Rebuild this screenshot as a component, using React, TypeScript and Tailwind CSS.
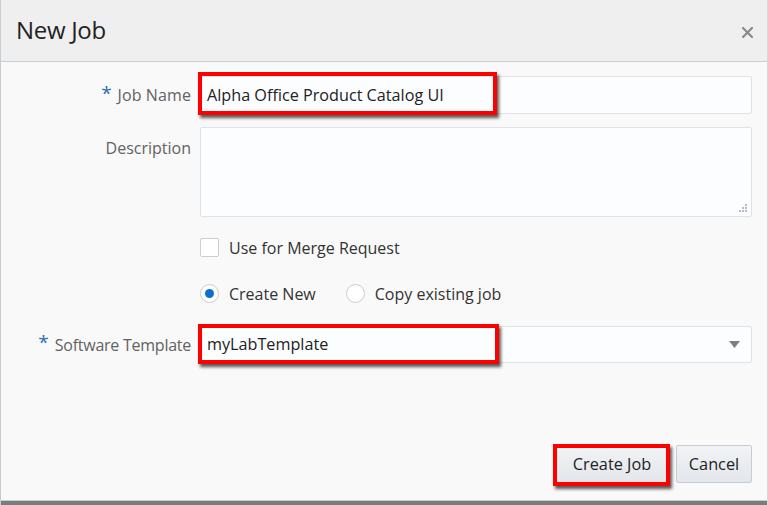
import React from "react";

const font = { fontFamily: '"Open Sans", "Noto Sans", Arial, sans-serif' };

function RedBox({ className }: { className: string }) {
  return (
    <div
      className={`pointer-events-none absolute border-[4px] border-[#ff0000] shadow-[2px_3px_3px_rgba(0,0,0,0.65)] ${className}`}
    />
  );
}

export default function App() {
  return (
    <div
      className="w-[768px] h-[505px] flex flex-col bg-[#f9f9f9] border-l border-l-[#c3ced9] border-r border-r-[#d6d9dc] overflow-hidden text-[#333]"
      style={font}
    >
      {/* Header */}
      <div className="h-[62px] shrink-0 bg-[#efefef] border-b border-b-[#c7d0d8] flex items-center justify-between pl-[15px] pr-[14px]">
        <div className="text-[24px] leading-none tracking-[-0.3px] text-[#222] -mt-[2px]">New Job</div>
        <svg width="11" height="11" viewBox="0 0 11 11" className="mt-[4px]">
          <path d="M1 1 L10 10 M10 1 L1 10" stroke="#858b91" strokeWidth="2.2" strokeLinecap="square" />
        </svg>
      </div>

      {/* Body */}
      <div className="flex-1 flex flex-col pt-[14px] pr-[15px]">
        {/* Job Name */}
        <div className="flex">
          <div className="w-[190px] shrink-0 flex justify-end items-center h-[38px] text-[16px] text-[#626262]">
            <span className="text-[#2f6cb5] text-[19px] mr-[6px] -mt-[4px]">*</span>
            <span className="tracking-[0.1px]">Job Name</span>
          </div>
          <div className="ml-[9px] flex-1 relative">
            <div className="h-[38px] bg-[#fcfdfe] border border-[#dfe3e8] rounded-[2px] flex items-center pl-[6px] text-[16.2px] text-[#222]">
              Alpha Office Product Catalog UI
            </div>
            <RedBox className="left-[-2px] top-[-4px] w-[299px] h-[43px]" />
          </div>
        </div>

        {/* Description */}
        <div className="flex mt-[13px]">
          <div className="w-[190px] shrink-0 flex justify-end pt-[9px] text-[16px] text-[#626262]">
            Description
          </div>
          <div className="ml-[9px] flex-1 relative h-[90px] bg-[#fcfdfe] border border-[#dfe3e8] rounded-[2px]">
            <svg width="10" height="10" viewBox="0 0 10 10" className="absolute right-[3px] bottom-[3px]">
              <rect x="7" y="1" width="2" height="2" fill="#b8bcc0" />
              <rect x="4" y="4" width="2" height="2" fill="#b8bcc0" />
              <rect x="7" y="4" width="2" height="2" fill="#b8bcc0" />
              <rect x="1" y="7" width="2" height="2" fill="#b8bcc0" />
              <rect x="4" y="7" width="2" height="2" fill="#b8bcc0" />
              <rect x="7" y="7" width="2" height="2" fill="#b8bcc0" />
            </svg>
          </div>
        </div>

        {/* Checkbox */}
        <div className="flex items-center mt-[21px] ml-[199px] h-[19px]">
          <div className="w-[19px] h-[19px] bg-white border border-[#c6ced6] rounded-[2px]" />
          <span className="ml-[10px] text-[16px] text-[#333]">Use for Merge Request</span>
        </div>

        {/* Radios */}
        <div className="flex items-center mt-[27px] ml-[199px] h-[19px]">
          <div className="w-[19px] h-[19px] rounded-full bg-white border border-[#c6ced6] flex items-center justify-center">
            <div className="w-[9px] h-[9px] rounded-full bg-[#0a6fcf]" />
          </div>
          <span className="ml-[10px] text-[16px] text-[#333]">Create New</span>
          <div className="ml-[30px] w-[19px] h-[19px] rounded-full bg-white border border-[#c6ced6]" />
          <span className="ml-[10px] text-[16px] text-[#333]">Copy existing job</span>
        </div>

        {/* Software Template */}
        <div className="flex mt-[23px]">
          <div className="w-[190px] shrink-0 flex justify-end items-center h-[37px] text-[16px] text-[#626262]">
            <span className="text-[#2f6cb5] text-[19px] mr-[6px] -mt-[4px]">*</span>
            <span className="tracking-[-0.25px]">Software Template</span>
          </div>
          <div className="ml-[9px] flex-1 relative">
            <div className="h-[37px] bg-[#fcfdfe] border border-[#dfe3e8] rounded-[2px] flex items-center justify-between pl-[6px] pr-[11px] text-[16.2px] text-[#222]">
              <span>myLabTemplate</span>
              <svg width="11" height="7" viewBox="0 0 11 7">
                <path d="M0 0 L11 0 L5.5 7 Z" fill="#7b7f83" />
              </svg>
            </div>
            <RedBox className="left-[-2px] top-[-2px] w-[301px] h-[40px]" />
          </div>
        </div>

        {/* Buttons */}
        <div className="flex justify-end mt-[82px] gap-[8px]">
          <div className="relative">
            <div className="h-[38px] w-[112px] flex items-center justify-center bg-gradient-to-b from-[#f1f3f5] to-[#e3e7eb] border border-[#c5ccd3] rounded-[2px] text-[16.3px] text-[#222]">
              Create Job
            </div>
            <RedBox className="left-[-3px] top-[-1px] w-[117px] h-[42px]" />
          </div>
          <div className="h-[38px] w-[76px] flex items-center justify-center bg-gradient-to-b from-[#f1f3f5] to-[#e3e7eb] border border-[#c5ccd3] rounded-[2px] text-[16.3px] text-[#222]">
            Cancel
          </div>
        </div>
      </div>

      {/* Bottom edge */}
      <div className="h-[1px] bg-[#c5ccd3] shrink-0" />
      <div className="h-[4px] bg-[#7b7b7b] shrink-0" />
    </div>
  );
}
